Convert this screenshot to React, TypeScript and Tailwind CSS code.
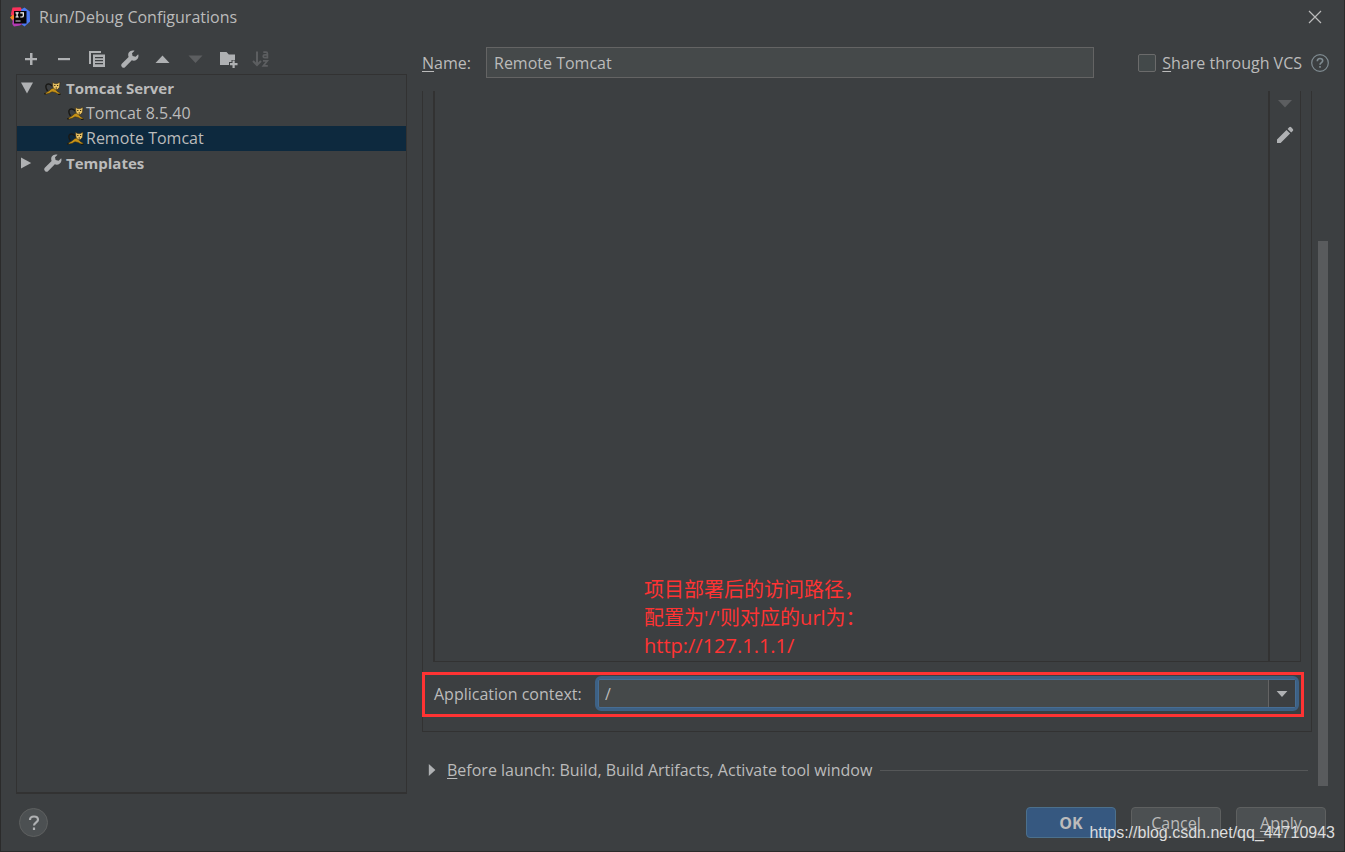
import { useState } from "react";
import type { ReactNode } from "react";

interface IconProps {
  children: ReactNode;
  className?: string;
}

function Icon({ children, className = "size-5" }: IconProps) {
  return (
    <svg viewBox="0 0 20 20" className={`shrink-0 ${className}`} fill="#afb1b3" aria-hidden="true">
      {children}
    </svg>
  );
}

const WRENCH =
  "M18.2 5.2 15.6 7.8 12.6 7.1 12 4.3 14.6 1.7C12.4.9 10 1.6 8.8 3.6 8 5 8 6.6 8.6 8L1.8 14.8C1 15.6 1 17 1.8 17.8L2.2 18.2C3 19 4.2 19 5 18.2L11.8 11.3C13.4 12 15.3 11.8 16.8 10.5 18.4 9.1 18.9 7 18.2 5.2Z";

function TomcatIcon() {
  return (
    <Icon>
      <path d="M9 8.2C7.5 5.5 4 5.2 3 7.500c-.6 1.900 0 3.200 1.600 5.500" fill="none" stroke="#1a1916" strokeWidth="1.400" />
      <path d="M11.500 9.500 8.500 10.800 5.500 13.300 1.500 15.400 2 16.300 6 15.400 9 13.800 12 14.400 15 16 17.200 16 17 15 14.600 13.700 13.400 12.500 14 10.500Z" fill="#c79218" stroke="#2b2410" strokeWidth=".5" />
      <path d="M9.400 4.300 11.600 5.600H14.400L17 4 16.500 9.200 14.500 11.600H12.200L10 9.500Z" fill="#ecc566" stroke="#30270f" strokeWidth=".6" />
      <path d="M11.200 7h1.200v1h-1.200zM14 7h1.200v1H14zM12.600 9.400H14v1.200h-1.400z" fill="#362b12" />
      <path d="M1 15.800h2M15 16.400h2.500" stroke="#171713" strokeWidth="1" />
    </Icon>
  );
}

function IdeaLogo() {
  return (
    <svg viewBox="0 0 20 20" className="size-5" aria-hidden="true">
      <path d="M2.500.500 10.500.300 13 4 8 9 3 10 .8 7.500Z" fill="#fc315b" />
      <path d="M11 2.500 14.500 .5 19.800 4.500 20 14.500 14.500 19.500 11 17Z" fill="#4b79f2" />
      <path d="M0 10.500 3 7.500 6 12 3 14Z" fill="#f78422" />
      <path d="M3 12 8 12 13 16 10 18.500 4 19.500 2.200 17Z" fill="#b43bb4" />
      <rect x="4" y="4" width="12.500" height="12.500" fill="#080608" />
      <path d="M5.500 5.900h3.200M7.100 6v4M5.500 10h3.200M10.300 5.900h3v2.800q0 1.300-1.300 1.300h-1.700" fill="none" stroke="#fff" strokeWidth="1.200" />
      <path d="M5.500 14h5" stroke="#d9d9d9" strokeWidth="1" />
    </svg>
  );
}

const TOOLS = [
  { label: "Add New Configuration", icon: <path d="M9 4h2.500v5H16v2.200h-4.500V16H9v-4.800H4V9h5z" /> },
  { label: "Remove Configuration", icon: <path d="M4 9h12v2.200H4z" /> },
  {
    label: "Copy Configuration",
    icon: (
      <>
        <path d="M2 2h12v2H4v11H2z" />
        <path fillRule="evenodd" d="M6 5.500h12V18H6zM8 8v1.300h8V8zm0 3v1.300h8V11zm0 3v1.300h8V14z" />
      </>
    ),
  },
  { label: "Edit Templates", icon: <path d={WRENCH} /> },
  { label: "Move Up", icon: <path d="M2.500 14 9.500 6.500l7 7.500z" /> },
  { label: "Move Down", disabled: true, icon: <path d="M2.500 6.500h14L9.500 14z" fill="#5c5e60" /> },
  {
    label: "Create New Folder",
    icon: (
      <>
        <path d="M1 3h6.500l2.300 2.500H16V11h-3.500v2H10v3H1z" />
        <path d="M13.500 11.500h2.200V14h2.800v2.200h-2.800v2.800h-2.200v-2.800H11V14h2.500z" />
      </>
    ),
  },
  {
    label: "Sort Configurations",
    disabled: true,
    icon: (
      <g fill="none" stroke="#5c5e60" strokeWidth="2">
        <path d="M5 2.500v13M1 12 5 16 9 12" />
        <path d="M11.300 3.200h2.800q1.300 0 1.300 1.200v4.300h-2.700q-1.500 0-1.500-1.400t1.500-1.400h2.700M11 11.900h4.300l-4 5h4.500" strokeWidth="1.700" />
      </g>
    ),
  },
];

function Toolbar() {
  return (
    <div className="flex h-7 items-center gap-[13px] pb-[2px] pl-[5px]">
      {TOOLS.map((tool) => (
        <button key={tool.label} type="button" aria-label={tool.label} disabled={tool.disabled}>
          <Icon>{tool.icon}</Icon>
        </button>
      ))}
    </div>
  );
}

const TREE_ROW = "flex h-[25px] w-full items-center pb-[2px]";

function ConfigTree() {
  const [open, setOpen] = useState(true);
  const [selected, setSelected] = useState("Remote Tomcat");

  return (
    <ul className="min-h-0 flex-1 border border-b-2 border-[#323232] pt-px">
      <li>
        <button
          type="button"
          aria-expanded={open}
          onClick={() => setOpen(!open)}
          className={`${TREE_ROW} pl-1 text-[15px] font-bold`}
        >
          <Icon className="mr-[6px] size-3"><path d={open ? "M0 1h20L10 19z" : "M0 1l17 9L0 19z"} /></Icon>
          <span className="ml-1 mr-[3px]"><TomcatIcon /></span>
          Tomcat Server
        </button>
        {open && (
          <ul>
            {["Tomcat 8.5.40", "Remote Tomcat"].map((name) => (
              <li key={name}>
                <button
                  type="button"
                  onClick={() => setSelected(name)}
                  className={`${TREE_ROW} pl-[49px] ${selected === name ? "bg-[#0d293e]" : ""}`}
                >
                  <TomcatIcon />
                  {name}
                </button>
              </li>
            ))}
          </ul>
        )}
      </li>
      <li>
        <button type="button" aria-expanded={false} className={`${TREE_ROW} pl-1 text-[15px] font-bold`}>
          <Icon className="mr-[6px] size-3"><path d="M0 1l17 9L0 19z" /></Icon>
          <span className="ml-1 mr-[3px]"><Icon><path d={WRENCH} /></Icon></span>
          Templates
        </button>
      </li>
    </ul>
  );
}

function NameRow() {
  return (
    <div className="flex h-[33px] items-center">
      <label htmlFor="name" className="w-16"><u className="underline-offset-2">N</u>ame:</label>
      <input
        id="name"
        defaultValue="Remote Tomcat"
        className="h-[31px] min-w-0 flex-1 border border-[#646464] bg-[#45494a] px-[7px] outline-none"
      />
      <input
        id="share"
        type="checkbox"
        className="ml-11 size-[18px] appearance-none rounded-xs border border-[#6b6b6b] bg-[#43494a] checked:bg-[#365880]"
      />
      <label htmlFor="share" className="ml-[6px]"><u className="underline-offset-2">S</u>hare through VCS</label>
      <button type="button" aria-label="About sharing" className="ml-[9px]">
        <svg viewBox="0 0 18 18" className="size-[18px]" fill="none" stroke="#7f8b91" aria-hidden="true">
          <circle cx="9" cy="9" r="8.300" strokeWidth="1.200" />
          <path d="M6.300 7.200q0-2.700 2.700-2.700t2.700 2.300c0 1.700-2.700 1.900-2.700 3.900M9 12v1.800" strokeWidth="1.600" />
        </svg>
      </button>
    </div>
  );
}

function DeploymentPanel() {
  return (
    <div className="flex min-h-0 flex-1 flex-col border border-t-0 border-[#323232] pb-[14px]">
      <div className="relative mx-[10px] flex flex-1 border border-l-2 border-t-0 border-[#323232]">
        <div className="flex-1" />
        <div className="flex w-8 flex-col items-center gap-[11px] border-l-2 border-[#323232] pt-[3px]">
          <button type="button" aria-label="Move artifact down" disabled>
            <Icon><path d="M3 6h14l-7 7.500z" fill="#5c5e60" /></Icon>
          </button>
          <button type="button" aria-label="Edit artifact">
            <Icon>
              <path d="M2 14.500 11.500 5l3.600 3.600L5.600 18H2zM12.600 3.900 14.200 2.300q1-1 2 0l1.600 1.600q1 1 0 2l-1.600 1.600z" />
            </Icon>
          </button>
        </div>
        <p className="absolute bottom-px left-[209px] text-xl leading-7 text-[#ff3333]">
          项目部署后的访问路径，
          <br />
          配置为<span className="font-medium">'/'</span>则对应的<span className="font-medium">url</span>为：
          <br />
          <span className="font-medium">http://127.1.1.1/</span>
        </p>
      </div>
      <div className="relative mt-[10px] flex h-[45px] items-center pb-[2px] pl-[11px] pr-3">
        <label htmlFor="context" className="w-[161px]">Application context:</label>
        <div className="flex h-[35px] min-w-0 flex-1 rounded-md border-3 border-[#3d6185] bg-[#45494a]">
          <div className="flex min-w-0 flex-1 rounded-xs border border-[#466d94]">
            <input id="context" defaultValue="/" className="min-w-0 flex-1 px-[6px] outline-none" />
            <button
              type="button"
              aria-label="Show contexts"
              className="flex w-[27px] items-center justify-center border-l border-[#646464] bg-[#3c3f41]"
            >
              <Icon className="size-3"><path d="M1 5h18l-9 10z" /></Icon>
            </button>
          </div>
        </div>
        <div className="pointer-events-none absolute inset-y-0 -left-px right-[7px] border-3 border-[#ff3333]" />
      </div>
    </div>
  );
}

function BeforeLaunch() {
  return (
    <div className="flex h-[62px] items-center pt-[14px]">
      <button type="button" aria-expanded={false} className="flex items-center pl-[5px]">
        <Icon className="mr-2 size-3"><path d="M3 0l11 10L3 20z" /></Icon>
        <span><u className="underline-offset-2">B</u>efore launch: Build, Build Artifacts, Activate tool window</span>
      </button>
      <div className="ml-2 mr-1 h-px flex-1 bg-[#555758]" />
    </div>
  );
}

const BUTTON = "h-[31px] w-[90px] rounded-[4px] border";

export default function App() {
  return (
    <div className="relative flex h-screen flex-col overflow-hidden border border-t-0 border-[#2b2b2b] bg-[#3c3f41] font-['Open_Sans','Noto_Sans_CJK_SC',sans-serif] text-base leading-6 text-[#bbbbbb]">
      <header className="flex h-[34px] shrink-0 items-center pl-[9px] pr-[22px]">
        <IdeaLogo />
        <h1 className="ml-[9px] flex-1">Run/Debug Configurations</h1>
        <button type="button" aria-label="Close">
          <svg viewBox="0 0 14 14" className="size-[14px]" stroke="#bbbbbb" strokeWidth="1.200" aria-hidden="true">
            <path d="M1 1l12 12M13 1 1 13" />
          </svg>
        </button>
      </header>

      <main className="flex min-h-0 flex-1 gap-[15px] px-[15px] pt-3">
        <aside className="flex w-[391px] shrink-0 flex-col">
          <Toolbar />
          <ConfigTree />
        </aside>
        <section className="flex min-w-0 flex-1 flex-col">
          <NameRow />
          <div className="mt-3 flex min-h-0 flex-1 gap-[6px]">
            <div className="flex min-w-0 flex-1 flex-col">
              <DeploymentPanel />
              <BeforeLaunch />
            </div>
            <div className="flex w-[11px] flex-col pb-2 pt-[150px]">
              <div className="w-[10px] flex-1 bg-[#595b5d]" />
            </div>
          </div>
        </section>
      </main>

      <footer className="flex h-[57px] shrink-0 items-center gap-[15px] px-[18px]">
        <button
          type="button"
          aria-label="Help"
          className="mr-auto flex size-[29px] items-center justify-center rounded-full border border-[#5e6060] bg-[#4c5052]"
        >
          <svg viewBox="0 0 12 16" className="h-4 w-3" fill="none" stroke="#afb1b3" strokeWidth="2.200" aria-hidden="true">
            <path d="M2 5q0-3.500 4-3.500t4 3.300c0 2.400-4 2.700-4 5.700M6 12.500V15" />
          </svg>
        </button>
        <button type="button" className={`${BUTTON} border-[#4c708c] bg-[#365880] font-bold`}>OK</button>
        <button type="button" className={`${BUTTON} border-[#5e6060] bg-[#4c5052]`}>Cancel</button>
        <button type="button" className={`${BUTTON} border-[#5e6060] bg-[#4c5052]`}><u className="underline-offset-2">A</u>pply</button>
      </footer>
      <span className="pointer-events-none absolute bottom-[6px] right-[9px] font-['Liberation_Sans',sans-serif] text-[#dddddd]">
        https://blog.csdn.net/qq_44710943
      </span>
    </div>
  );
}
